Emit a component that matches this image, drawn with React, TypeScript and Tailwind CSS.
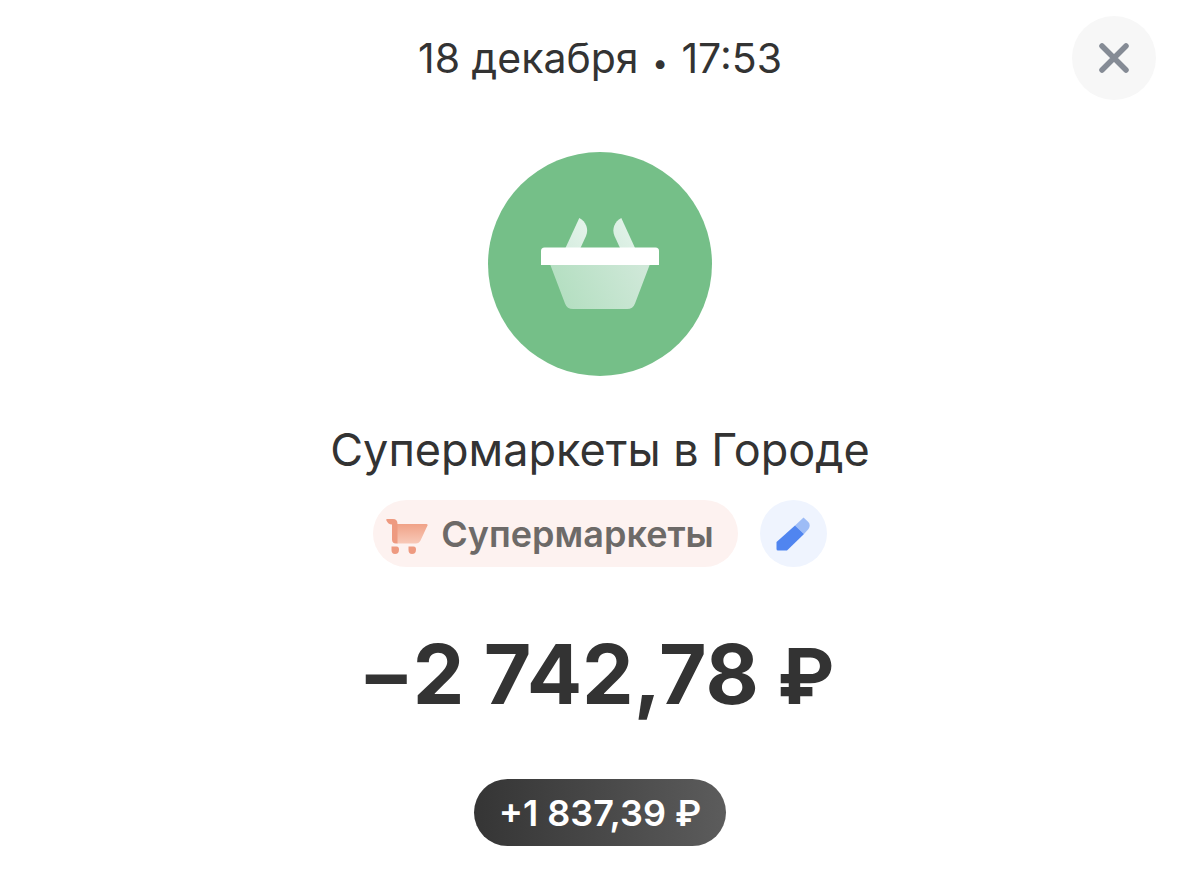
import React from 'react';

const BasketIcon: React.FC = () => (
  <svg viewBox="0 0 140 119" className="w-[140px]" aria-hidden="true">
    <defs>
      <linearGradient id="basket-body" gradientUnits="userSpaceOnUse" x1="35" y1="96" x2="112" y2="60">
        <stop offset="0" stopColor="#b5dfc2" />
        <stop offset="1" stopColor="#cfe8d8" />
      </linearGradient>
      <linearGradient id="basket-handle" x1="0" y1="1" x2="1" y2="0">
        <stop offset="0" stopColor="#d6ede0" />
        <stop offset="1" stopColor="#e6f4eb" />
      </linearGradient>
    </defs>
    <path d="M49.3 13C56 16.5 59 24 56 31L50 44H35Z" fill="url(#basket-handle)" />
    <path d="M91.3 13C84.5 16.5 81.5 24 84.5 31L90.5 44H105.5Z" fill="url(#basket-handle)" />
    <path d="M20 59H120L105 98.500Q103 104 97 104H43Q37 104 35 98.500Z" fill="url(#basket-body)" />
    <path d="M11 60V46Q11 42.500 14.500 42.500H125.500Q129 42.500 129 46V60Z" fill="#fff" />
  </svg>
);

const CartIcon: React.FC = () => (
  <svg viewBox="0 -5 42 41" className="w-[42px] shrink-0" aria-hidden="true">
    <defs>
      <linearGradient id="cart-body" x1="0" y1="0" x2="0" y2="1">
        <stop offset="0" stopColor="#f0a287" />
        <stop offset="1" stopColor="#f8c9b8" />
      </linearGradient>
    </defs>
    <path d="M11 6H40.500Q42 6 41.500 7.500L34.500 22.500Q33 25.500 30 25.500H11Z" fill="url(#cart-body)" />
    <path d="M1 1H7Q11.500 1 11.500 6V25.500H10Q6 25.500 6 21.500V6.500Q2 6.500 0.300 2.300Q0 1 1 1Z" fill="#ee9a80" />
    <path d="M5.500 28.500H10.500Q13 28.500 13 31.500Q13 36 9 36Q5.500 36 5.500 32Z" fill="#ee9a80" />
    <path d="M22.500 28.500H27.500Q30 28.500 30 31.500Q30 36 26 36Q22.500 36 22.500 32Z" fill="#ee9a80" />
  </svg>
);

const PencilIcon: React.FC = () => (
  <svg viewBox="0 0 34 34" className="w-[34px]" aria-hidden="true">
    <path d="M19 8.500L27.500 0.500L32.300 5Q35 8 32.500 12L28 17Z" fill="#9dbcf6" />
    <path d="M0.500 25L19 8.500L28 17L11 33.500H2Q0.500 33.500 0.500 32Z" fill="#5085f0" />
  </svg>
);

const CloseIcon: React.FC = () => (
  <svg viewBox="0 0 32 32" className="w-8" fill="none" stroke="#858b95" strokeWidth="5.5" strokeLinecap="round" aria-hidden="true">
    <path d="M4 4L28 28M28 4L4 28" />
  </svg>
);

export default function App() {
  return (
    <main className="min-h-screen bg-white text-[#333333] font-['Inter',sans-serif] pb-11">
      <header className="grid grid-cols-[84px_1fr_84px] items-center px-11 pt-4">
        <time className="col-start-2 text-center text-[41px] leading-[48px]">
          18 декабря <span className="text-[28px] leading-none px-0.5">•</span> 17:53
        </time>
        <button
          type="button"
          aria-label="Закрыть"
          className="size-[84px] rounded-full bg-[#f7f7f7] flex items-center justify-center cursor-pointer"
        >
          <CloseIcon />
        </button>
      </header>

      <section className="flex flex-col items-center">
        <div className="mt-[52px] size-[224px] rounded-full bg-[#75bf88] flex items-center justify-center">
          <BasketIcon />
        </div>

        <h1 className="mt-[46px] text-[45px] leading-[56px] text-center">Супермаркеты в Городе</h1>

        {/* Category and its edit button */}
        <div className="mt-[22px] flex items-center gap-[22px]">
          <button
            type="button"
            className="h-[67px] rounded-full bg-[#fdf2f0] pl-[13px] pr-6 flex items-center gap-[13px] text-[36px] font-semibold text-[#6d6a68] cursor-pointer"
          >
            <CartIcon />
            <span>Супермаркеты</span>
          </button>
          <button
            type="button"
            aria-label="Изменить категорию"
            className="size-[67px] rounded-full bg-[#eff4fe] flex items-center justify-center cursor-pointer"
          >
            <PencilIcon />
          </button>
        </div>

        <p className="mt-[60px] text-[82px] leading-[96px] font-bold whitespace-nowrap">
          <span className="mr-1.5">–</span>2&nbsp;742,78<span className="text-[77px] leading-none">&nbsp;₽</span>
        </p>

        {/* Cashback */}
        <div className="mt-14 h-[67px] rounded-full bg-linear-to-r from-[#353535] to-[#5c5c5c] px-[25px] flex items-center text-[36px] font-semibold text-white whitespace-nowrap">
          +1&nbsp;837,39&nbsp;₽
        </div>
      </section>
    </main>
  );
}
